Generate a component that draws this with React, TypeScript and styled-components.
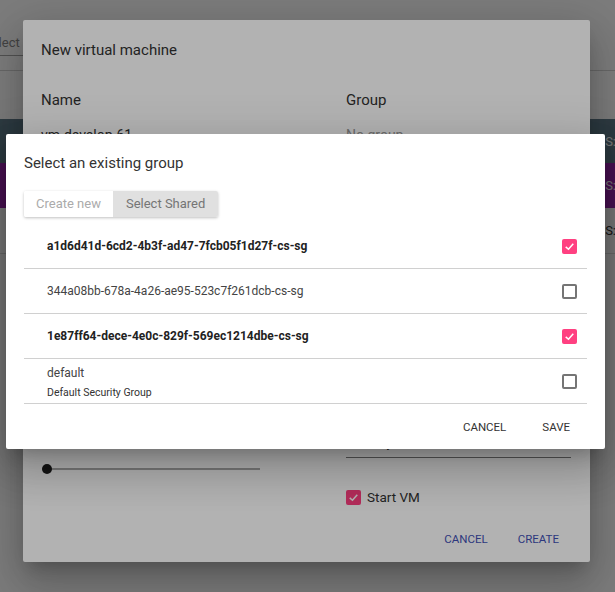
import React from 'react';
import styled, { createGlobalStyle } from 'styled-components';

const GlobalStyle = createGlobalStyle`
    html, body {
        margin: 0;
        padding: 0;
    }
    body {
        font-family: Roboto, "Liberation Sans", sans-serif;
        background: #fff;
        overflow: hidden;
    }
`;

const groups = [
    { id: 'a1d6d41d-6cd2-4b3f-ad47-7fcb05f1d27f-cs-sg', checked: true },
    { id: '344a08bb-678a-4a26-ae95-523c7f261dcb-cs-sg', checked: false },
    { id: '1e87ff64-dece-4e0c-829f-569ec1214dbe-cs-sg', checked: true },
    { id: 'default', description: 'Default Security Group', checked: false },
];

const Check = ({ checked }: { checked: boolean }) => (
    <CheckBox $checked={checked}>
        {checked && (
            <svg width='11' height='11' viewBox='0 0 16 16'>
                <path d='M2.5 8.5 L6.5 12 L13.5 4' fill='none' stroke='#fff' strokeWidth='2.2' />
            </svg>
        )}
    </CheckBox>
);

export default function App() {
    return (
        <Root>
            <GlobalStyle />

            <Page>
                <TopBar>
                    <SearchField>Select</SearchField>
                </TopBar>
                <Table>
                    <Row $tone='teal'><Cell>IPS:</Cell></Row>
                    <Row $tone='purple'><Cell>IPS:</Cell></Row>
                    <Row $tone='plain'><Cell>IPS:</Cell></Row>
                </Table>
            </Page>

            <Backdrop />

            <VmDialog>
                <DialogTitle>New virtual machine</DialogTitle>
                <FieldGrid>
                    <FieldLabel>Name</FieldLabel>
                    <FieldLabel>Group</FieldLabel>
                    <FieldValue>vm-develop-61</FieldValue>
                    <FieldValue $muted>No group</FieldValue>
                </FieldGrid>

                <LowerGrid>
                    <SliderTrack>
                        <SliderThumb />
                    </SliderTrack>
                    <div>
                        <InputLine>Security</InputLine>
                        <CheckRow>
                            <Check checked />
                            <CheckLabel>Start VM</CheckLabel>
                        </CheckRow>
                    </div>
                </LowerGrid>

                <VmActions>
                    <FlatButton $primary>Cancel</FlatButton>
                    <FlatButton $primary>Create</FlatButton>
                </VmActions>
            </VmDialog>

            <Backdrop />

            <GroupDialog>
                <DialogTitle $top={19}>Select an existing group</DialogTitle>
                <Toggle>
                    <ToggleButton>Create new</ToggleButton>
                    <ToggleButton $active>Select Shared</ToggleButton>
                </Toggle>

                <GroupList>
                    {groups.map(g => (
                        <GroupRow key={g.id}>
                            <GroupText $twoLine={!!g.description}>
                                <GroupName $bold={g.checked}>{g.id}</GroupName>
                                {g.description && <GroupDesc>{g.description}</GroupDesc>}
                            </GroupText>
                            <Check checked={g.checked} />
                        </GroupRow>
                    ))}
                </GroupList>

                <GroupActions>
                    <FlatButton>Cancel</FlatButton>
                    <FlatButton>Save</FlatButton>
                </GroupActions>
            </GroupDialog>
        </Root>
    );
}

const Root = styled.div`
    position: relative;
    width: 615px;
    height: 592px;
    overflow: hidden;
`;

const Page = styled.div`
    height: 100%;
    background: #fff;
`;

const TopBar = styled.div`
    height: 71px;
    box-sizing: border-box;
    border-bottom: 1px solid #d4d4d4;
    display: flex;
    align-items: flex-start;
`;

const SearchField = styled.div`
    margin: 35px 0 0 -16px;
    width: 140px;
    padding-bottom: 4px;
    line-height: 16px;
    font-size: 13px;
    color: #8a8a8a;
    border-bottom: 1px solid #a8a8a8;
`;

const Table = styled.div`
    margin-top: 48px;
`;

const tones = {
    teal: { bg: '#607d8b', fg: '#fff', h: 44 },
    purple: { bg: '#9c27b0', fg: '#fff', h: 45 },
    plain: { bg: '#fff', fg: '#333', h: 46 },
};

const Row = styled.div<{ $tone: keyof typeof tones }>`
    height: ${p => tones[p.$tone].h}px;
    box-sizing: border-box;
    display: flex;
    align-items: center;
    justify-content: flex-end;
    background: ${p => tones[p.$tone].bg};
    color: ${p => tones[p.$tone].fg};
    border-bottom: ${p => (p.$tone === 'plain' ? '1px solid #ddd' : 'none')};
`;

const Cell = styled.span`
    font-size: 13px;
    margin-right: -1px;
`;

const Backdrop = styled.div`
    position: absolute;
    inset: 0;
    background: rgba(0, 0, 0, 0.3);
`;

const dialogShadow = `
    0 11px 15px -7px rgba(0, 0, 0, 0.2),
    0 24px 38px 3px rgba(0, 0, 0, 0.14),
    0 9px 46px 8px rgba(0, 0, 0, 0.12)
`;

const VmDialog = styled.div`
    position: absolute;
    left: 23px;
    top: 20px;
    width: 567px;
    height: 542px;
    box-sizing: border-box;
    padding: 0 16px 0 18px;
    background: #fff;
    border-radius: 2px;
    box-shadow: ${dialogShadow};
    display: flex;
    flex-direction: column;
`;

const DialogTitle = styled.div<{ $top?: number }>`
    margin-top: ${p => p.$top ?? 20}px;
    font-size: 15px;
    line-height: 20px;
    color: #333;
`;

const FieldGrid = styled.div`
    display: grid;
    grid-template-columns: 225px 225px;
    column-gap: 80px;
    row-gap: 15px;
    margin-top: 30px;
`;

const FieldLabel = styled.div`
    font-size: 15px;
    line-height: 20px;
    color: #333;
`;

const FieldValue = styled.div<{ $muted?: boolean }>`
    font-size: 14px;
    line-height: 20px;
    color: ${p => (p.$muted ? '#9a9a9a' : '#333')};
`;

// the rest of the form sits behind the group picker
const LowerGrid = styled.div`
    display: grid;
    grid-template-columns: 225px 225px;
    column-gap: 80px;
    margin-top: 289px;
`;

const SliderTrack = styled.div`
    position: relative;
    margin: 34px 6px 0 1px;
    height: 2px;
    background: #adadad;
`;

const SliderThumb = styled.div`
    position: absolute;
    left: 0;
    top: -4px;
    width: 10px;
    height: 10px;
    border-radius: 50%;
    background: #1e1e1e;
`;

const InputLine = styled.div`
    font-size: 13px;
    line-height: 18px;
    padding-bottom: 5px;
    color: #333;
    border-bottom: 1px solid #7c7c7c;
`;

const CheckRow = styled.div`
    display: flex;
    align-items: center;
    gap: 6px;
    margin-top: 31px;
`;

const CheckLabel = styled.span`
    font-size: 13.5px;
    color: #333;
`;

const CheckBox = styled.span<{ $checked: boolean }>`
    width: 15px;
    height: 15px;
    box-sizing: border-box;
    border-radius: 2px;
    display: inline-flex;
    align-items: center;
    justify-content: center;
    flex-shrink: 0;
    background: ${p => (p.$checked ? '#ff4081' : 'transparent')};
    border: ${p => (p.$checked ? 'none' : '2px solid #757575')};
`;

const VmActions = styled.div`
    margin-top: auto;
    margin-bottom: 5px;
    display: flex;
    justify-content: flex-end;
`;

const FlatButton = styled.button<{ $primary?: boolean }>`
    height: 36px;
    padding: 0 15px;
    border: none;
    background: transparent;
    font-family: Roboto, "Liberation Sans", sans-serif;
    font-size: 11.5px;
    text-transform: uppercase;
    color: ${p => (p.$primary ? '#3f51b5' : '#333')};
    cursor: pointer;
`;

const GroupDialog = styled.div`
    position: absolute;
    left: 6px;
    top: 134px;
    width: 599px;
    height: 315px;
    box-sizing: border-box;
    padding: 0 18px;
    background: #fff;
    border-radius: 2px;
    box-shadow: ${dialogShadow};
    display: flex;
    flex-direction: column;
`;

const Toggle = styled.div`
    display: flex;
    align-self: flex-start;
    margin-top: 18px;
    box-shadow: 0 1px 3px rgba(0, 0, 0, 0.25);
    border-radius: 2px;
    overflow: hidden;
`;

const ToggleButton = styled.div<{ $active?: boolean }>`
    height: 26px;
    line-height: 26px;
    padding: 0 ${p => (p.$active ? 13 : 12)}px;
    font-size: 13px;
    background: ${p => (p.$active ? '#e0e0e0' : '#fff')};
    color: ${p => (p.$active ? '#757575' : '#ababab')};
`;

const GroupList = styled.div`
    margin-top: 7px;
`;

const GroupRow = styled.div`
    height: 45px;
    box-sizing: border-box;
    padding: 0 10px 0 23px;
    display: flex;
    align-items: center;
    justify-content: space-between;
    border-bottom: 1px solid #d0d0d0;
`;

const GroupText = styled.div<{ $twoLine?: boolean }>`
    padding-top: ${p => (p.$twoLine ? 3 : 0)}px;
`;

const GroupName = styled.div<{ $bold?: boolean }>`
    font-size: 12px;
    line-height: 16px;
    font-weight: ${p => (p.$bold ? 700 : 400)};
    color: ${p => (p.$bold ? '#222' : '#444')};
`;

const GroupDesc = styled.div`
    margin-top: 4px;
    font-size: 10.5px;
    line-height: 16px;
    color: #333;
`;

const GroupActions = styled.div`
    flex: 1;
    display: flex;
    align-items: center;
    justify-content: flex-end;
    margin-right: -1px;

    button {
        padding: 0 18px;
    }
`;
